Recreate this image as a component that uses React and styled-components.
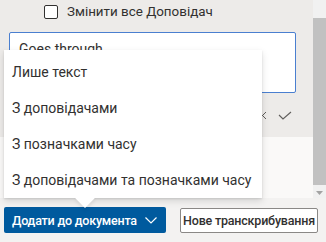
import styled, { createGlobalStyle } from "styled-components";

const GlobalStyle = createGlobalStyle`
   html, body {
      margin: 0;
      padding: 0;
      background: #f3f2f1;
   }
   * {
      box-sizing: border-box;
   }
`;

const Pane = styled.div`
   position: relative;
   width: 326px;
   height: 242px;
   overflow: hidden;
   display: grid;
   grid-template-columns: 1fr 13px;
   grid-template-rows: 198px 44px;
   font-family: Roboto, "Noto Sans", sans-serif;
   color: #323130;
`;

const Content = styled.div`
   display: flex;
   flex-direction: column;
   background: #faf9f8;
`;

const Editor = styled.div`
   display: flex;
   flex-direction: column;
   height: 137px;
   padding: 0 17px 0 9px;
   background: #edebe9;
`;

const CheckRow = styled.label`
   display: flex;
   align-items: center;
   gap: 9px;
   height: 23px;
   padding-left: 35px;
   margin-bottom: 9px;
   font-size: 13.4px;
`;

const Box = styled.span`
   width: 14px;
   height: 14px;
   border: 1px solid #323130;
   border-radius: 2px;
   background: #fff;
`;

const TextBox = styled.div`
   height: 61px;
   padding: 6px 9px;
   border: 1px solid #4a7fd0;
   border-radius: 2px;
   background: #fff;
   font-size: 14px;
   line-height: 20px;
`;

const Actions = styled.div`
   display: flex;
   justify-content: flex-end;
   align-items: center;
   gap: 11px;
   flex: 1;
   padding-right: 4px;
   color: #605e5c;
`;

const Scrollbar = styled.div`
   display: flex;
   flex-direction: column;
   background: #f1f1f1;
`;

const Thumb = styled.div`
   margin-top: 18px;
   height: 167px;
   background: #c1c1c1;
`;

const Arrow = styled.div`
   display: flex;
   justify-content: center;
   padding-top: 6px;
   svg {
      fill: #a3a3a3;
   }
`;

const Footer = styled.div`
   grid-column: 1 / 3;
   display: flex;
   align-items: center;
   gap: 14px;
   padding: 0 8px 0 4px;
   background: #f3f2f1;
`;

const PrimaryButton = styled.button`
   display: flex;
   align-items: center;
   justify-content: space-between;
   width: 162px;
   height: 26px;
   padding: 0 9px 0 8px;
   border: none;
   border-radius: 2px;
   background: #005a9e;
   color: #fff;
   font-family: inherit;
   font-size: 12.5px;
   font-weight: 500;
   letter-spacing: -0.2px;
   white-space: nowrap;
`;

const DefaultButton = styled.button`
   width: 138px;
   height: 25px;
   padding: 0;
   border: 1px solid #8a8886;
   border-radius: 2px;
   background: #fff;
   color: #323130;
   font-family: inherit;
   font-size: 12.5px;
   font-weight: 500;
   letter-spacing: -0.2px;
   white-space: nowrap;
`;

const Menu = styled.div`
   position: absolute;
   left: 4px;
   top: 50px;
   width: 258px;
   padding-top: 4px;
   background: #fff;
   box-shadow: 0 3.2px 7.2px rgba(0, 0, 0, 0.13), 0 0.6px 1.8px rgba(0, 0, 0, 0.11);
   z-index: 2;

   &::after {
      content: "";
      position: absolute;
      left: 74px;
      bottom: -7px;
      width: 14px;
      height: 14px;
      background: #fff;
      transform: rotate(45deg);
      box-shadow: 2px 2px 4px rgba(0, 0, 0, 0.08);
      z-index: -1;
   }
`;

const MenuItem = styled.div`
   position: relative;
   height: 36px;
   display: flex;
   align-items: center;
   padding-left: 8px;
   background: #fff;
   font-size: 14px;
   white-space: nowrap;
`;

const menuItems = [
   "Лише текст",
   "З доповідачами",
   "З позначками часу",
   "З доповідачами та позначками часу",
];

const App = () => {
   return (
      <>
         <GlobalStyle />
         <Pane>
            <Content>
               <Editor>
                  <CheckRow>
                     <Box />
                     Змінити все Доповідач
                  </CheckRow>
                  <TextBox>Goes through</TextBox>
                  <Actions>
                     <svg width="9" height="9" viewBox="0 0 9 9">
                        <path d="M1 1 L8 8 M8 1 L1 8" stroke="currentColor" strokeWidth="1" />
                     </svg>
                     <svg width="14" height="9" viewBox="0 0 14 9">
                        <path d="M1 4 L5 8 L13 1" stroke="currentColor" strokeWidth="1.1" fill="none" />
                     </svg>
                  </Actions>
               </Editor>
            </Content>
            <Scrollbar>
               <Thumb />
               <Arrow>
                  <svg width="7" height="4" viewBox="0 0 7 4">
                     <path d="M0 0 H7 L3.5 4 Z" />
                  </svg>
               </Arrow>
            </Scrollbar>
            <Footer>
               <PrimaryButton>
                  Додати до документа
                  <svg width="12" height="7" viewBox="0 0 12 7">
                     <path d="M0.5 0.5 L6 6 L11.5 0.5" stroke="#fff" strokeWidth="1.2" fill="none" />
                  </svg>
               </PrimaryButton>
               <DefaultButton>Нове транскрибування</DefaultButton>
            </Footer>
            <Menu>
               {menuItems.map((item) => (
                  <MenuItem key={item}>{item}</MenuItem>
               ))}
            </Menu>
         </Pane>
      </>
   );
};

export default App;
